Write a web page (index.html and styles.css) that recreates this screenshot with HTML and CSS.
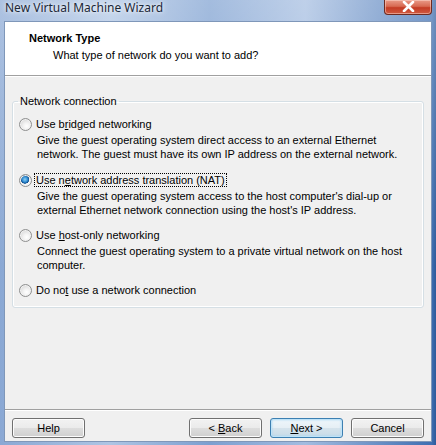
FILE: index.html
```html
<!DOCTYPE html>
<html>
<head>
<meta charset="utf-8">
<link rel="stylesheet" href="styles.css">
</head>
<body>
<div class="window">
  <div class="titlebar">
    <span class="title">New Virtual Machine Wizard</span>
    <div class="close">
      <svg width="13" height="11" viewBox="0 0 13 11"><path d="M2 1 L11 10 M11 1 L2 10" stroke="#fff" stroke-width="2.6" stroke-linecap="round"/></svg>
    </div>
  </div>
  <div class="client">
    <div class="header">
      <div class="h-title">Network Type</div>
      <div class="h-sub">What type of network do you want to add?</div>
    </div>
    <div class="body">
      <fieldset class="group">
        <legend>Network connection</legend>
        <div class="option first">
          <div class="opt-label"><span class="radio"></span><span class="lbl">Use b<u>r</u>idged networking</span></div>
          <div class="opt-desc">Give the guest operating system direct access to an external Ethernet<br>network. The guest must have its own IP address on the external network.</div>
        </div>
        <div class="option">
          <div class="opt-label"><span class="radio checked"></span><span class="lbl focus">Use n<u>e</u>twork address translation (NAT)</span></div>
          <div class="opt-desc">Give the guest operating system access to the host computer's dial-up or<br>external Ethernet network connection using the host's IP address.</div>
        </div>
        <div class="option">
          <div class="opt-label"><span class="radio"></span><span class="lbl">Use <u>h</u>ost-only networking</span></div>
          <div class="opt-desc">Connect the guest operating system to a private virtual network on the host<br>computer.</div>
        </div>
        <div class="option last">
          <div class="opt-label"><span class="radio"></span><span class="lbl">Do no<u>t</u> use a network connection</span></div>
        </div>
      </fieldset>
    </div>
    <div class="footer">
      <button class="btn help">Help</button>
      <button class="btn">&lt; <u>B</u>ack</button>
      <button class="btn default"><u>N</u>ext &gt;</button>
      <button class="btn">Cancel</button>
    </div>
  </div>
</div>
</body>
</html>
```

FILE: styles.css
```css
html, body {
  margin: 0;
  padding: 0;
}
body {
  width: 436px;
  height: 445px;
  overflow: hidden;
  font-family: "Liberation Sans", Tahoma, sans-serif;
  font-size: 11px;
  color: #000;
}
.window {
  width: 436px;
  height: 445px;
  display: flex;
  flex-direction: column;
  background:
    linear-gradient(to bottom, rgba(255,255,255,0.3), rgba(255,255,255,0) 60%),
    linear-gradient(to right, #8aa8d4 0%, #aec5e4 25%, #7c9fd0 48%, #a3bce0 70%, #3f6fb2 99%, #2d5a9a 100%);
}
.titlebar {
  height: 21px;
  display: flex;
  align-items: flex-start;
  padding-left: 5px;
  flex: none;
}
.title {
  font-family: "Noto Sans", "Open Sans", sans-serif;
  font-size: 12px;
  line-height: 16px;
  color: #1b2838;
  text-shadow: 0 0 6px rgba(255,255,255,0.9), 0 0 3px rgba(255,255,255,0.7);
}
.close {
  margin-left: auto;
  margin-right: 4px;
  width: 46px;
  height: 14px;
  border: 1px solid #6e2a20;
  border-top: none;
  border-radius: 0 0 4px 4px;
  background: linear-gradient(to bottom, #e99a88 0%, #d86a52 45%, #c43b24 55%, #d05a40 100%);
  box-shadow: inset 0 0 0 1px rgba(255,220,210,0.5);
  display: flex;
  align-items: center;
  justify-content: center;
}
.close svg {
  display: block;
  margin-top: -1px;
}
.client {
  flex: 1;
  margin: 0 4px 3px 4px;
  border: 1px solid #7f97b9;
  background: #f0f0f0;
  display: flex;
  flex-direction: column;
}
.header {
  background: #fff;
  border-bottom: 1px solid #a0a0a0;
  padding: 9px 0 0 24px;
  height: 44px;
}
.h-title {
  font-weight: bold;
  line-height: 14px;
}
.h-sub {
  line-height: 14px;
  margin-top: 3px;
  padding-left: 24px;
}
.body {
  flex: 1;
  padding-top: 18px;
  box-shadow: inset 0 1px 0 #fff;
}
.group {
  margin: 0 7px;
  padding: 9px 6px 10px 5px;
  border: 1px solid #d5dfe5;
  border-radius: 3px;
  box-shadow: inset 0 0 0 1px #fff;
}
.group legend {
  padding: 0 2px;
  line-height: 14px;
}
.option {
  margin-bottom: 11px;
}
.option.first {
  margin-bottom: 12px;
}
.option.last {
  margin-bottom: 0;
}
.opt-label {
  display: flex;
  align-items: center;
  height: 14px;
}
.radio {
  flex: none;
  width: 11px;
  height: 11px;
  margin-left: 1px;
  margin-right: 3px;
  border-radius: 50%;
  border: 1px solid #8e8f8f;
  background: radial-gradient(circle at 60% 65%, #ffffff 0%, #f4f4f4 30%, #d4d4d4 85%, #c8c8c8 100%);
  box-shadow: inset 0 0 0 1px #f2f2f2;
}
.radio.checked {
  background:
    radial-gradient(circle at 45% 40%, #8ed0f5 0%, #2f8bd0 30%, #0c4d8e 45%, transparent 50%),
    radial-gradient(circle at 60% 65%, #ffffff 0%, #f4f4f4 30%, #d4d4d4 85%, #c8c8c8 100%);
}
.lbl {
  line-height: 12px;
  padding: 0 1px;
  border: 1px solid transparent;
  margin-left: -1px;
}
.lbl.focus {
  border: 1px dotted #000;
}
.opt-desc {
  padding-left: 19px;
  margin-top: 2px;
  line-height: 14px;
}
.footer {
  flex: none;
  height: 32px;
  box-sizing: border-box;
  border-top: 1px solid #a0a0a0;
  box-shadow: inset 0 1px 0 #fff;
  padding: 8px 7px 0 7px;
  display: flex;
  align-items: flex-start;
  gap: 8px;
}
.btn {
  width: 73px;
  height: 20px;
  padding: 0;
  margin: 0;
  font-family: "Liberation Sans", Tahoma, sans-serif;
  font-size: 11px;
  color: #000;
  border: 1px solid #707070;
  border-radius: 3px;
  background: linear-gradient(to bottom, #f2f2f2 0%, #ebebeb 48%, #dddddd 52%, #cfcfcf 100%);
  box-shadow: inset 0 0 0 1px #fcfcfc;
}
.btn.help {
  margin-right: auto;
}
.btn.default {
  border-color: #3c7fb1;
  background: linear-gradient(to bottom, #eef6fb 0%, #e6eff5 48%, #d5e3ec 52%, #c8dbe7 100%);
  box-shadow: inset 0 0 0 1px #bfe3f8, inset 0 0 2px 1px #9fd3f2;
}
```
